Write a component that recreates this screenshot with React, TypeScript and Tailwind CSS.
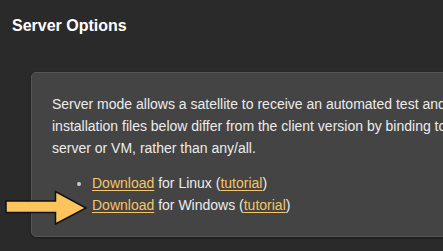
export default function App() {
  return (
    <div className="relative h-[251px] w-[443px] overflow-hidden bg-[#2a2a2a] pt-[17px] pl-3 font-['Liberation_Sans',Arial,sans-serif] text-[#ececec]">
      <h2 className="text-[16px] font-bold leading-[18px] text-white">Server Options</h2>

      <div className="mt-[37px] ml-[19px] w-[640px] rounded-[5px] border border-[#555] bg-[#444] p-5 text-[14px] leading-[22px] shadow-[0_1px_3px_rgba(0,0,0,0.4)]">
        <p className="whitespace-nowrap">
          Server mode allows a satellite to receive an automated test and run it on demand. The
          <br />
          installation files below differ from the client version by binding to a specific
          <br />
          server or VM, rather than any/all.
        </p>
        <ul className="mt-[13px] list-disc pl-10 marker:text-[#ccc]">
          <li>
            <a href="#" className="text-[#f7c563] underline underline-offset-2">Download</a> for Linux (
            <a href="#" className="text-[#f7c563] underline underline-offset-2">tutorial</a>)
          </li>
          <li className="list-none">
            <a href="#" className="text-[#f7c563] underline underline-offset-2">Download</a> for Windows (
            <a href="#" className="text-[#f7c563] underline underline-offset-2">tutorial</a>)
          </li>
        </ul>
      </div>

      {/* pointer arrow over the card */}
      <svg className="absolute left-0 top-[188px]" width="92" height="40" viewBox="0 0 92 40">
        <polygon
          points="6,13 55.5,13 55.5,3.5 86,20 55.5,36 55.5,24.5 6,24.5"
          fill="#fcc45c"
          stroke="#111"
          strokeWidth="1.5"
          strokeLinejoin="miter"
        />
      </svg>
    </div>
  )
}
